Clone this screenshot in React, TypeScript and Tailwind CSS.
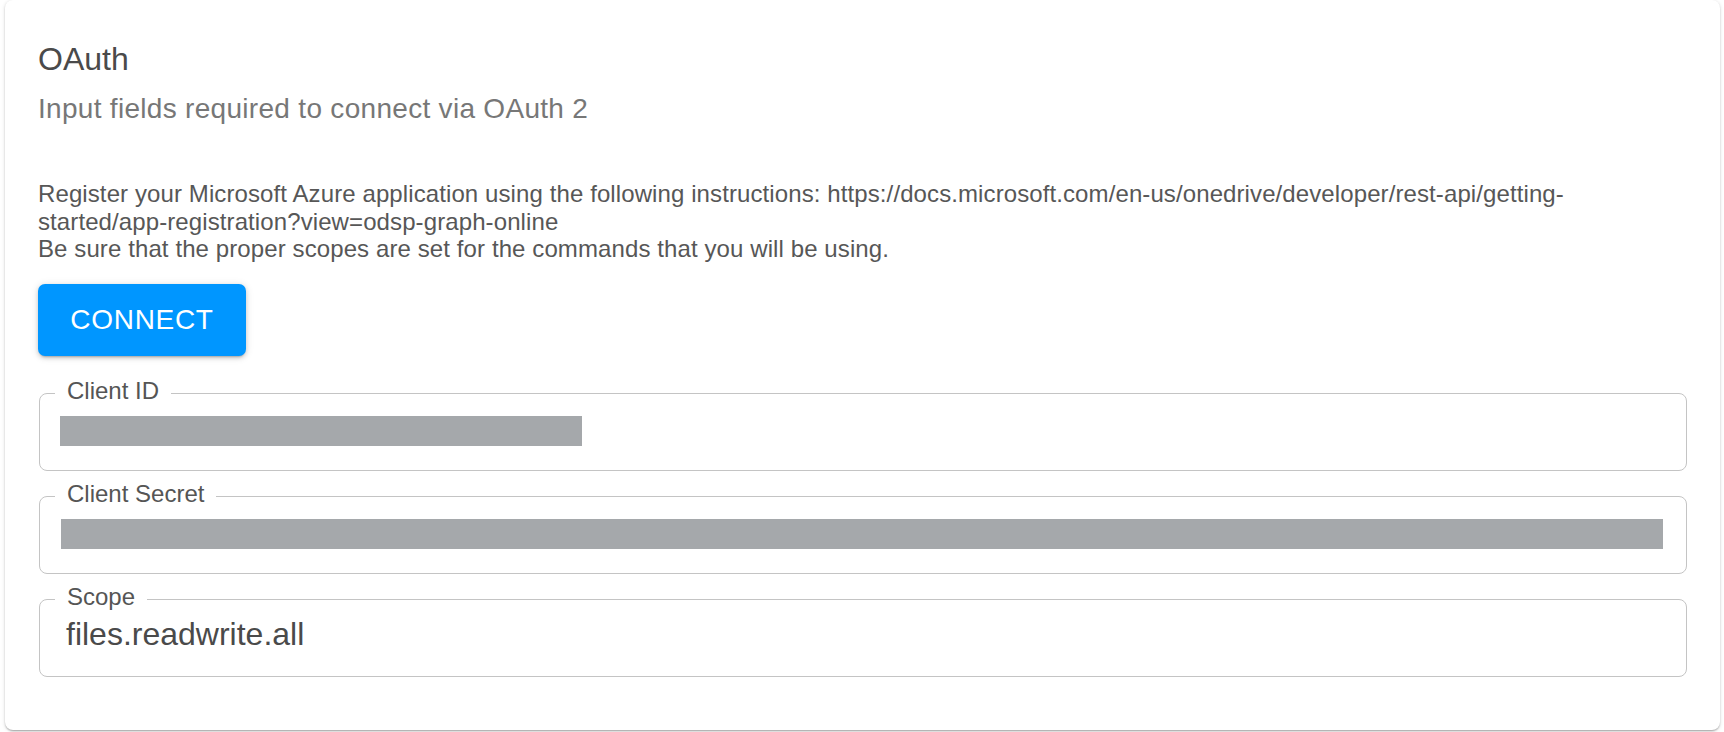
import React from "react";

type Field = {
  label: string;
  value?: string;
  redacted?: { ml: string; w: string };
};

const fields: Field[] = [
  { label: "Client ID", redacted: { ml: "ml-[20px]", w: "w-[522px]" } },
  { label: "Client Secret", redacted: { ml: "ml-[21px]", w: "w-[1602px]" } },
  { label: "Scope", value: "files.readwrite.all" },
];

function OutlinedField({ field }: { field: Field }) {
  return (
    <fieldset className="ml-[1px] min-w-0 rounded-[8px] border border-[#c4c4c4] p-0">
      <legend className="ml-[15px] px-[12px] pb-[5px] text-[24px] leading-[24px] text-[#555]">{field.label}</legend>
      {field.redacted ? (
        <div className="h-[62px] pt-[8px]">
          <div className={`${field.redacted.ml} ${field.redacted.w} h-[30px] bg-[#a5a8ab]`} />
        </div>
      ) : (
        <div className="h-[62px] pl-[26px] pt-[1px] text-[32px] leading-[38px] text-[#4a4a4a]">{field.value}</div>
      )}
    </fieldset>
  );
}

export default function App() {
  return (
    <div
      className="h-[732px] w-[1724px] overflow-hidden bg-white pb-[2px] pl-[5px] pr-[4px]"
      style={{ fontFamily: '"Liberation Sans", Arial, Helvetica, sans-serif' }}
    >
      <div className="h-[730px] rounded-[8px] bg-white px-[33px] pt-[34px] shadow-[0_2px_2px_-1px_rgba(0,0,0,0.2),0_1px_2px_0_rgba(0,0,0,0.14),0_1px_4px_0_rgba(0,0,0,0.12)]">
        <h2 className="text-[32px] font-normal leading-[51px] text-[#4a4a4a]">OAuth</h2>
        <p className="text-[28px] leading-[47px] tracking-[0.3px] text-[#777]">Input fields required to connect via OAuth 2</p>

        <p className="mt-[48px] text-[24px] leading-[27.5px] tracking-[0.1px] text-[#575757]">
          Register your Microsoft Azure application using the following instructions:
          https://docs.microsoft.com/en-us/onedrive/developer/rest-api/getting-
          <br />
          started/app-registration?view=odsp-graph-online
          <br />
          Be sure that the proper scopes are set for the commands that you will be using.
        </p>

        <button
          type="button"
          className="mt-[21.5px] flex h-[72px] w-[208px] items-center justify-center rounded-[7px] bg-[#0096ff] text-[28px] tracking-[0.7px] text-white shadow-[0_3px_2px_-2px_rgba(0,0,0,0.2),0_2px_4px_0_rgba(0,0,0,0.14),0_1px_8px_0_rgba(0,0,0,0.12)]"
        >
          CONNECT
        </button>

        <div className="mt-[23px] flex flex-col gap-[11px]">
          {fields.map((f) => (
            <OutlinedField key={f.label} field={f} />
          ))}
        </div>
      </div>
    </div>
  );
}
